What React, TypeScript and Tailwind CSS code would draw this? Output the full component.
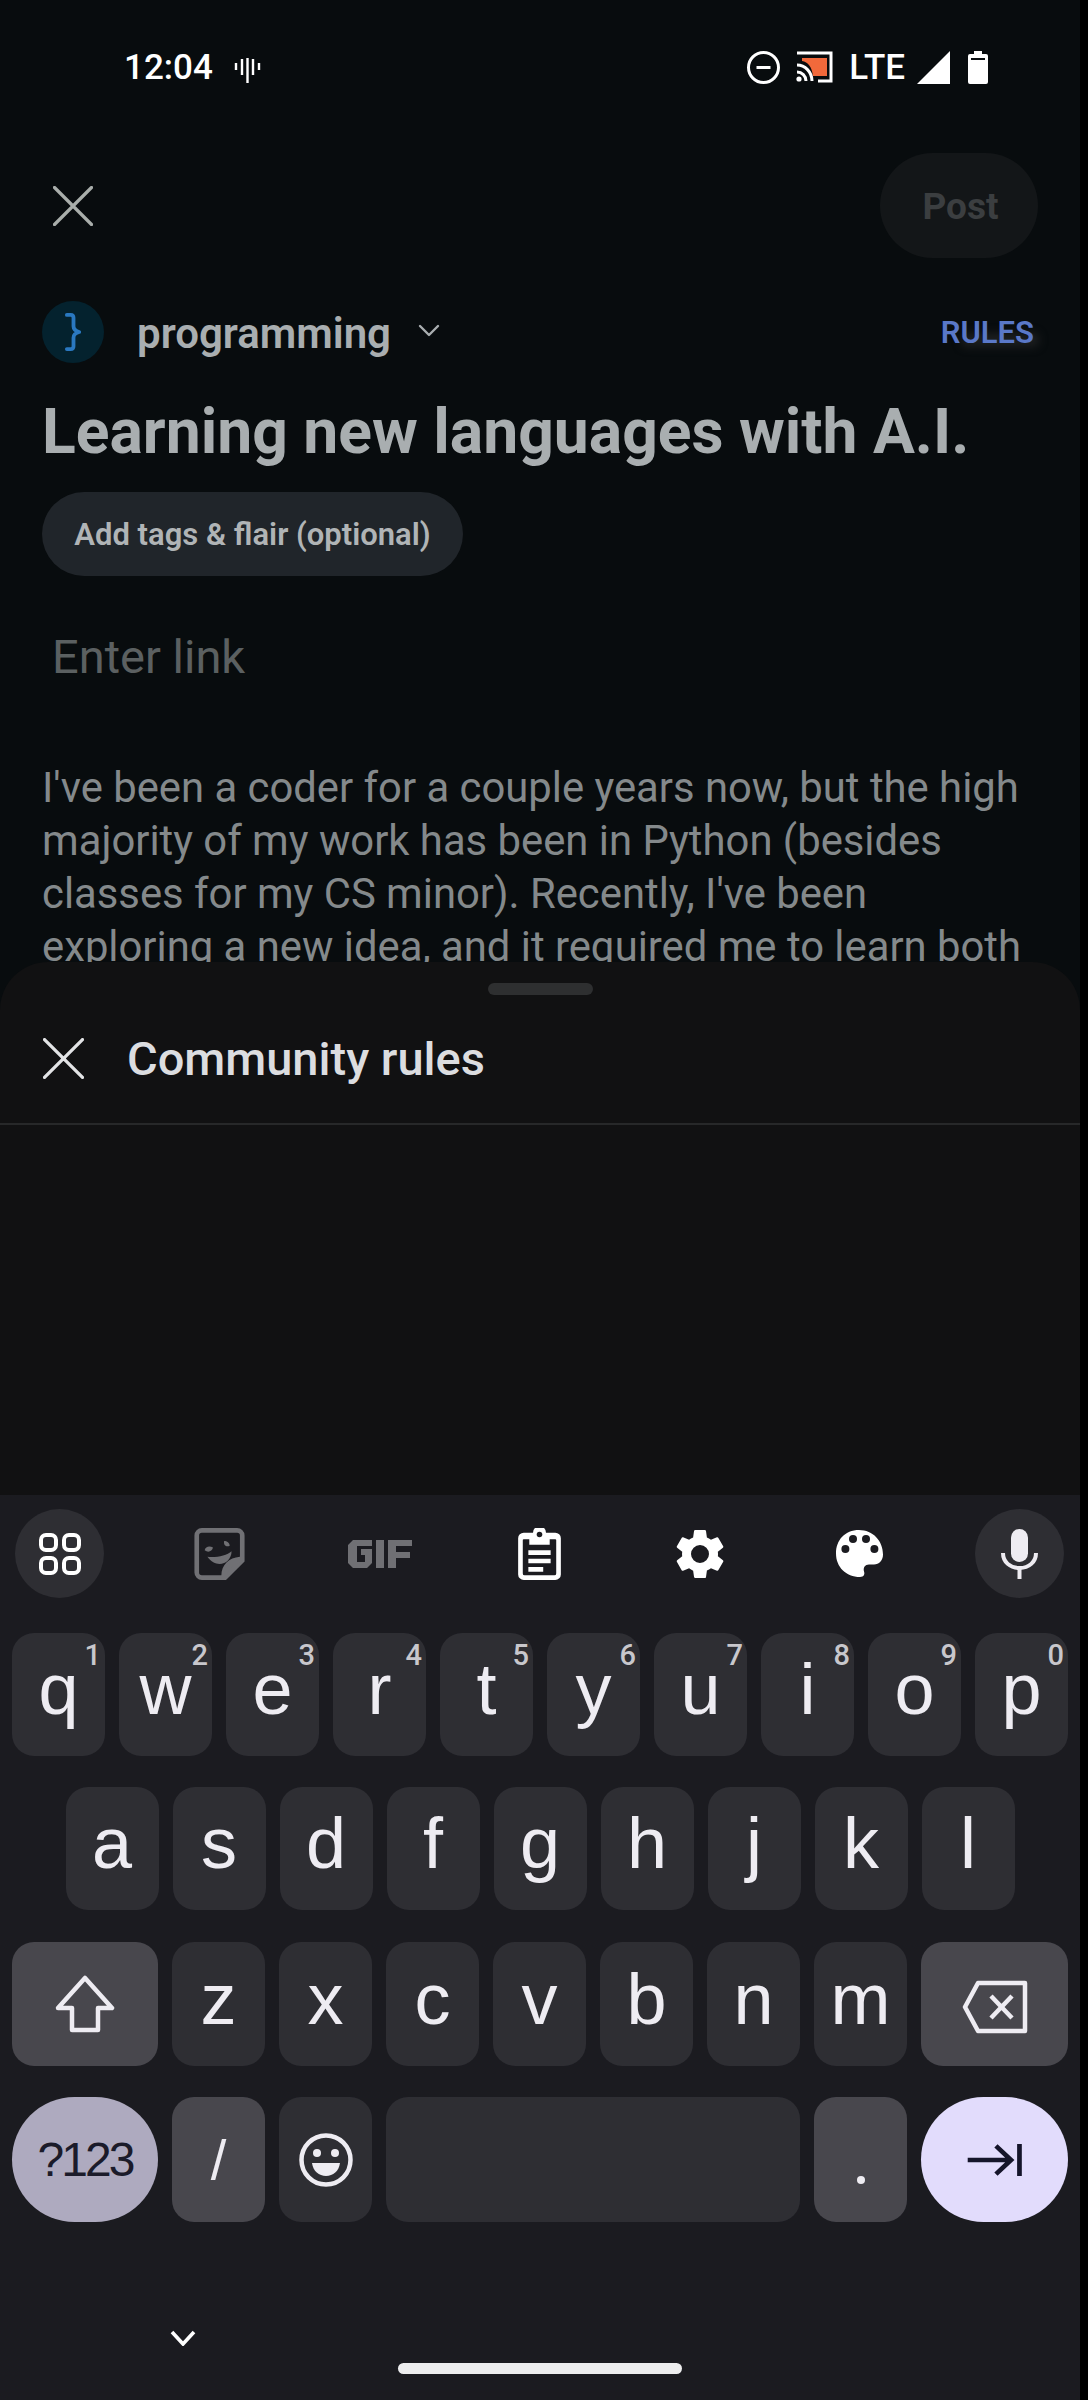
import React from 'react';

const roboto = { fontFamily: 'Roboto, sans-serif' };

const CloseIcon: React.FC<{ className: string }> = ({ className }) => (
  <svg viewBox="0 0 40 40" className={className} fill="none" stroke="currentColor" strokeWidth="3.2" strokeLinecap="round">
    <path d="M1.5 1.5 38.5 38.5M38.5 1.5 1.5 38.5" />
  </svg>
);

const StatusBar = () => (
  <div className="flex h-[134px] items-center justify-between pl-[124px] pr-[92px] text-white">
    <div className="flex items-center gap-[21px]">
      <span className="text-[35px] leading-none font-medium" style={roboto}>12:04</span>
      <svg viewBox="0 0 27 25" className="mt-[6px] h-[25px] w-[27px]" fill="none" stroke="currentColor" strokeWidth="2.4">
        <path d="M2 5v7M8 1v16M13.5 0v25M19 1v16M25 5v7" />
      </svg>
    </div>
    <div className="flex items-center">
      <svg viewBox="0 0 33 33" className="h-[33px] w-[33px]" fill="none" stroke="currentColor" strokeWidth="3">
        <circle cx="16.5" cy="16.5" r="15" />
        <path d="M9.5 16.5h14" />
      </svg>
      <svg viewBox="0 0 37 32" className="ml-[16px] h-[32px] w-[37px]">
        <path d="M1 2h34v28H22" fill="none" stroke="#fff" strokeWidth="3" />
        <path d="M6 7h25v18H17C16 16 12 11 6 10Z" fill="#f2693b" />
        <path d="M1 14c8 0 15 7 15 16M1 21c5 0 9 4 9 9" fill="none" stroke="#fff" strokeWidth="3" />
        <circle cx="3" cy="28" r="2.6" fill="#fff" />
      </svg>
      <span className="ml-[16px] text-[35px] leading-none font-medium" style={roboto}>LTE</span>
      <svg viewBox="0 0 33 33" className="ml-[12px] h-[33px] w-[33px]">
        <path d="M0 33 33 0v33Z" fill="#fff" />
      </svg>
      <svg viewBox="0 0 20 33" className="ml-[18px] h-[33px] w-[20px]">
        <path d="M6 0h8v3h4a2 2 0 0 1 2 2v26a2 2 0 0 1-2 2H2a2 2 0 0 1-2-2V5a2 2 0 0 1 2-2h4Z" fill="#fff" />
        <path d="M3 7h14v2H3Z" fill="#0a0e10" />
      </svg>
    </div>
  </div>
);

const PostForm = () => (
  <div className="h-[962px] overflow-hidden" style={roboto}>
    <StatusBar />
    <div className="flex items-center justify-between pt-[19px] pl-[53px] pr-[42px]">
      <CloseIcon className="h-[40px] w-[40px] text-[#a9aeab]" />
      <div className="flex h-[105px] w-[158px] items-center justify-center rounded-full bg-[#131618] pt-[2px] pl-[3px] text-[37px] font-bold text-[#3b3e40]">
        Post
      </div>
    </div>
    <div className="mt-[43px] flex h-[62px] items-center justify-between pl-[42px] pr-[46px]">
      <div className="flex items-center">
        <div className="flex h-[62px] w-[62px] items-center justify-center rounded-full bg-[#04222e]">
          <svg viewBox="0 0 20 40" className="h-[38px] w-[19px]" fill="none" stroke="#2a78c0" strokeWidth="4" strokeLinecap="round" strokeLinejoin="round">
            <path d="M3 2h4c2 0 3 1 3 3v9c0 3 2 5 6 6-4 1-6 3-6 6v9c0 2-1 3-3 3H3" />
          </svg>
        </div>
        <span className="ml-[33px] mt-[3px] text-[42px] leading-none font-semibold text-[#a9aeb0]">programming</span>
        <svg viewBox="0 0 22 13" className="ml-[27px] mt-[-4px] h-[13px] w-[22px]" fill="none" stroke="#a9aeb0" strokeWidth="2.4" strokeLinecap="round" strokeLinejoin="round">
          <path d="M2 2 11 11 20 2" />
        </svg>
      </div>
      <div className="relative mt-[3px]">
        <div className="absolute top-[16px] left-[20px] h-[14px] w-[78px] rounded-[6px] bg-[#1c1e1f] blur-[4px]" />
        <span className="relative text-[31px] leading-none font-semibold text-[#5a78c8]">RULES</span>
      </div>
    </div>
    <h1 className="mt-[33px] pl-[42px] text-[62.4px] leading-[72px] font-bold whitespace-nowrap text-[#a9aeb0]">
      Learning new languages with A.I.
    </h1>
    <div className="mt-[24px] ml-[42px] flex h-[84px] w-[421px] items-center justify-center rounded-full bg-[#20252a] pt-[3px] text-[31px] font-semibold text-[#b0b4b6]">
      Add tags &amp; flair (optional)
    </div>
    <div className="mt-[53px] pl-[52px] text-[47px] leading-[56px] text-[#5b6061]">Enter link</div>
    <p className="mt-[76px] pl-[42px] text-[41.8px] leading-[53px] whitespace-nowrap text-[#84898b]">
      I've been a coder for a couple years now, but the high
      <br />
      majority of my work has been in Python (besides
      <br />
      classes for my CS minor). Recently, I've been
      <br />
      exploring a new idea, and it required me to learn both
    </p>
  </div>
);

const RulesSheet = () => (
  <div className="h-[533px] rounded-t-[48px] bg-[#111112]" style={roboto}>
    <div className="flex justify-center pt-[21px]">
      <div className="h-[12px] w-[105px] rounded-full bg-[#2e2f30]" />
    </div>
    <div className="mt-[40px] flex items-center pl-[43px]">
      <CloseIcon className="h-[41px] w-[41px] text-[#e2e3e5]" />
      <span className="ml-[43px] text-[47px] leading-none font-medium text-[#dcdde0]">Community rules</span>
    </div>
    <div className="mt-[41px] h-[2px] bg-[#272829]" />
  </div>
);

const ToolSlot: React.FC<{ round?: boolean; children: React.ReactNode }> = ({ round, children }) => (
  <div className={`flex h-[89px] w-[89px] items-center justify-center rounded-full ${round ? 'bg-[#2e2e33]' : ''}`}>
    {children}
  </div>
);

const Toolbar = () => (
  <div className="flex h-[138px] items-center justify-between pb-[21px] pl-[15px] pr-[16px]">
    <ToolSlot round>
      <svg viewBox="0 0 42 42" className="h-[42px] w-[42px]" fill="none" stroke="#fff" strokeWidth="4">
        <rect x="2" y="2" width="15" height="15" rx="5" />
        <rect x="25" y="2" width="15" height="15" rx="5" />
        <rect x="2" y="25" width="15" height="15" rx="5" />
        <rect x="25" y="25" width="15" height="15" rx="5" />
      </svg>
    </ToolSlot>
    <ToolSlot>
      <svg viewBox="0 0 54 56" className="h-[52px] w-[53px]">
        <path d="M8 0h38a8 8 0 0 1 8 8v28L34 56H8a8 8 0 0 1-8-8V8a8 8 0 0 1 8-8Zm0 5a3 3 0 0 0-3 3v40a3 3 0 0 0 3 3h21c0-11 8-19 20-20V8a3 3 0 0 0-3-3Z" fill="#707074" />
        <path d="M35 53c0-8 6-15 17-16L35 53Z" fill="#707074" />
        <path d="M11 24c1-4 5-5 9-3-1 4-5 6-9 3ZM32 14c3 0 6 2 6 5-3 2-7 0-6-5ZM14 31c9 1 21-1 26-6 0 13-16 20-26 6Z" fill="#707074" />
      </svg>
    </ToolSlot>
    <ToolSlot>
      <svg viewBox="0 0 64 28" className="h-[28px] w-[64px]" fill="#707074">
        <path d="M5 0h19v6H9v16h8v-7h-4V9h11v14l-5 5H5l-5-5V5Z" />
        <path d="M28 0h8v28h-8Z" />
        <path d="M40 0h24v6H48v6h14v6H48v10h-8Z" />
      </svg>
    </ToolSlot>
    <ToolSlot>
      <svg viewBox="0 0 46 56" className="h-[52px] w-[45px]">
        <path d="M16 5a7 7 0 0 1 14 0h10a6 6 0 0 1 6 6v39a6 6 0 0 1-6 6H6a6 6 0 0 1-6-6V11a6 6 0 0 1 6-6Z" fill="#fff" />
        <path d="M12 12H6a1 1 0 0 0-1 1v36a2 2 0 0 0 2 2h32a2 2 0 0 0 2-2V13a1 1 0 0 0-1-1h-6v6H12Z" fill="#1b1b20" />
        <circle cx="23" cy="7" r="3" fill="#1b1b20" />
        <path d="M11 24h24v5H11ZM11 33h24v5H11ZM11 42h16v5H11Z" fill="#fff" />
      </svg>
    </ToolSlot>
    <ToolSlot>
      <svg viewBox="0 0 24 24" className="h-[60px] w-[60px]" fill="#fff">
        <path d="M19.14 12.94c.04-.3.06-.61.06-.94s-.02-.64-.07-.94l2.03-1.58a.49.49 0 0 0 .12-.61l-1.92-3.32a.49.49 0 0 0-.59-.22l-2.39.96a7 7 0 0 0-1.62-.94l-.36-2.54a.48.48 0 0 0-.48-.41h-3.84a.48.48 0 0 0-.47.41l-.36 2.54c-.59.24-1.13.57-1.62.94l-2.39-.96a.48.48 0 0 0-.59.22L2.74 8.87a.48.48 0 0 0 .12.61l2.03 1.58c-.05.3-.07.62-.07.94s.02.64.07.94l-2.03 1.58a.49.49 0 0 0-.12.61l1.92 3.32c.12.22.37.29.59.22l2.39-.96c.5.38 1.03.7 1.62.94l.36 2.54c.05.24.24.41.48.41h3.84c.24 0 .44-.17.47-.41l.36-2.54c.59-.24 1.13-.56 1.62-.94l2.39.96c.22.08.47 0 .59-.22l1.92-3.32a.48.48 0 0 0-.12-.61l-2.01-1.58ZM12 15.6A3.6 3.6 0 1 1 12 8.4a3.6 3.6 0 0 1 0 7.2Z" />
      </svg>
    </ToolSlot>
    <ToolSlot>
      <svg viewBox="0 0 47 47" className="h-[47px] w-[47px]">
        <path d="M23 0C9 0 0 10 0 23.5S10 47 24 47c4 0 5-3 4-5.500-1-4 1-7 5-7h5c5 0 9-4 9-10C47 11 37 0 23 0Z" fill="#fff" />
        <circle cx="9.400" cy="19" r="4" fill="#1b1b20" />
        <circle cx="17" cy="9" r="4" fill="#1b1b20" />
        <circle cx="30" cy="9" r="4" fill="#1b1b20" />
        <circle cx="38.400" cy="19" r="4" fill="#1b1b20" />
      </svg>
    </ToolSlot>
    <ToolSlot round>
      <svg viewBox="0 0 37 50" className="h-[50px] w-[37px]">
        <rect x="10" y="0" width="17" height="33" rx="8.500" fill="#eeecf2" />
        <path d="M2 24c0 9 7 15 16.500 15S35 33 35 24" fill="none" stroke="#eeecf2" strokeWidth="4" />
        <path d="M16.500 38h4v12h-4Z" fill="#eeecf2" />
      </svg>
    </ToolSlot>
  </div>
);

const Key: React.FC<{ label?: string; hint?: string; className?: string; labelClass?: string; children?: React.ReactNode }> = ({
  label,
  hint,
  className = 'w-[93px] bg-[#2e2e33]',
  labelClass = 'mt-[-11px] text-[72px]',
  children,
}) => (
  <div className={`relative flex items-center justify-center rounded-[22px] text-[#eeecf2] ${className}`}>
    {hint && (
      <span className="absolute top-[8px] right-[4px] text-[29px] leading-[28px] font-medium text-[#c8c7cc]" style={roboto}>
        {hint}
      </span>
    )}
    {label && <span className={`leading-none ${labelClass}`}>{label}</span>}
    {children}
  </div>
);

const row1 = [['q', '1'], ['w', '2'], ['e', '3'], ['r', '4'], ['t', '5'], ['y', '6'], ['u', '7'], ['i', '8'], ['o', '9'], ['p', '0']];
const row2 = ['a', 's', 'd', 'f', 'g', 'h', 'j', 'k', 'l'];
const row3 = ['z', 'x', 'c', 'v', 'b', 'n', 'm'];

const Keyboard = () => (
  <div className="h-[905px] bg-[#1b1b20]" style={{ fontFamily: '"Liberation Sans", sans-serif' }}>
    <Toolbar />
    <div className="flex h-[123px] justify-center gap-[14px]">
      {row1.map(([k, n]) => (
        <Key key={k} label={k} hint={n} />
      ))}
    </div>
    <div className="mt-[31px] flex h-[123px] justify-center gap-[14px]">
      {row2.map((k) => (
        <Key key={k} label={k} />
      ))}
    </div>
    <div className="mt-[32px] flex h-[124px] justify-center gap-[14px]">
      <Key className="w-[146px] bg-[#48474d]">
        <svg viewBox="0 0 60 58" className="h-[58px] w-[60px]" fill="none" stroke="#eeecf2" strokeWidth="4.5" strokeLinejoin="round">
          <path d="M30 3 57 33H43v22H17V33H3Z" />
        </svg>
      </Key>
      {row3.map((k) => (
        <Key key={k} label={k} />
      ))}
      <Key className="w-[147px] bg-[#48474d]">
        <svg viewBox="0 0 66 54" className="mt-[6px] h-[54px] w-[66px]" fill="none" stroke="#eeecf2" strokeWidth="4.5" strokeLinejoin="round">
          <path d="M16 3h47v48H16L3 27Z" />
          <path d="M29 16 50 38M50 16 29 38" />
        </svg>
      </Key>
    </div>
    <div className="mt-[31px] flex h-[125px] justify-center gap-[14px]">
      <Key className="w-[146px] rounded-full bg-[#aeaabf]">
        <span className="text-[48px] leading-none tracking-[-3px] text-[#1b1b2a]">?123</span>
      </Key>
      <Key label="/" labelClass="text-[56px]" className="w-[93px] bg-[#48474d]" />
      <Key className="w-[93px] bg-[#2e2e33]">
        <svg viewBox="0 0 54 54" className="h-[54px] w-[54px]">
          <circle cx="27" cy="27" r="24.5" fill="none" stroke="#eeecf2" strokeWidth="4.5" />
          <circle cx="18" cy="20" r="4" fill="#eeecf2" />
          <circle cx="36" cy="20" r="4" fill="#eeecf2" />
          <path d="M13 30h28c-1 8-7 13-14 13s-13-5-14-13Z" fill="#eeecf2" />
        </svg>
      </Key>
      <div className="w-[414px] rounded-[22px] bg-[#2e2e33]" />
      <Key className="w-[93px] bg-[#48474d]">
        <span className="mt-[41px] h-[8px] w-[8px] rounded-full bg-[#eeecf2]" />
      </Key>
      <Key className="w-[147px] rounded-full bg-[#e2dcfc]">
        <svg viewBox="0 0 58 34" className="h-[32px] w-[56px]" fill="none" stroke="#15152a" strokeWidth="5">
          <path d="M0 17h46M30 2l16 15-16 15M55 0v34" />
        </svg>
      </Key>
    </div>
    <div className="mt-[108px] pl-[170px]">
      <svg viewBox="0 0 26 16" className="h-[16px] w-[26px]" fill="none" stroke="#fff" strokeWidth="3.6">
        <path d="M2 2 13 14 24 2" />
      </svg>
    </div>
    <div className="mt-[17px] flex justify-center">
      <div className="h-[11px] w-[284px] rounded-full bg-[#ededee]" />
    </div>
  </div>
);

export default function App() {
  return (
    <div className="flex h-[2400px] w-[1088px] overflow-hidden bg-black">
      <div className="w-[1080px] shrink-0 bg-[#080c0e]">
        <PostForm />
        <RulesSheet />
        <Keyboard />
      </div>
    </div>
  );
}
